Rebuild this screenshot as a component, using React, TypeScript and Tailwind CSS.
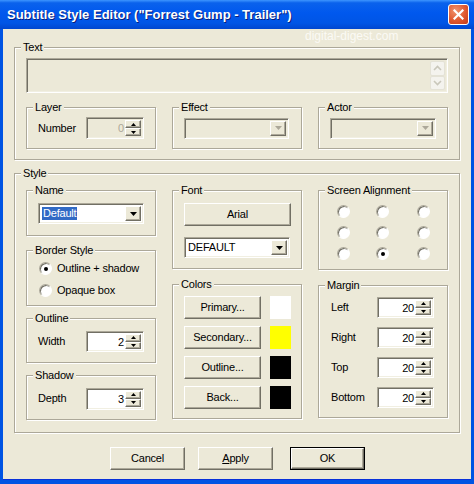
import React from "react";

const raised =
  "border border-t-white border-l-white border-r-[#716F64] border-b-[#716F64] shadow-[inset_-1px_-1px_0_#ACA899]";
const sunken =
  "border border-t-[#ACA899] border-l-[#ACA899] border-r-white border-b-white shadow-[inset_1px_1px_0_#716F64,inset_-1px_-1px_0_#F1EFE2]";

type GroupProps = { label: string; className?: string; children?: React.ReactNode };

const Group: React.FC<GroupProps> = ({ label, className = "", children }) => (
  <div className={`relative border border-[#ACA899] shadow-[inset_1px_1px_0_#fff,1px_1px_0_#fff] ${className}`}>
    <span className="absolute left-[6px] -top-[8px] bg-[#ECE9D8] px-[2px] leading-[14px]">{label}</span>
    {children}
  </div>
);

const Arrow: React.FC<{ disabled?: boolean }> = ({ disabled }) => (
  <svg width="7" height="4" viewBox="0 0 7 4">
    <path d="M0 0h7L3.5 4z" fill={disabled ? "#ACA899" : "#000"} />
  </svg>
);

const Combo: React.FC<{ value?: string; disabled?: boolean; selected?: boolean; className?: string }> = ({
  value,
  disabled,
  selected,
  className = "",
}) => (
  <div className={`flex h-[21px] p-[2px] ${sunken} ${disabled ? "bg-[#ECE9D8]" : "bg-white"} ${className}`}>
    <div className="flex flex-1 items-center pl-[1px]">
      {value && (
        <span className={selected ? "bg-[#316AC5] px-[1px] leading-[13px] text-white" : "leading-[13px]"}>
          {value}
        </span>
      )}
    </div>
    <div className={`flex w-[16px] items-center justify-center bg-[#ECE9D8] ${raised}`}>
      <Arrow disabled={disabled} />
    </div>
  </div>
);

const SpinBtn: React.FC<{ up?: boolean }> = ({ up }) => (
  <div className={`flex flex-1 items-center justify-center bg-[#ECE9D8] ${raised}`}>
    <svg width="5" height="3" viewBox="0 0 5 3">
      <path d={up ? "M0 3h5L2.5 0z" : "M0 0h5L2.5 3z"} fill="#000" />
    </svg>
  </div>
);

const Spin: React.FC<{ value: string; disabled?: boolean; className?: string }> = ({
  value,
  disabled,
  className = "",
}) => (
  <div className={`flex h-[21px] p-[2px] ${sunken} ${disabled ? "bg-[#ECE9D8]" : "bg-white"} ${className}`}>
    <div className={`flex-1 pr-[1px] text-right leading-[17px] ${disabled ? "text-[#ACA899]" : ""}`}>{value}</div>
    <div className="flex w-[16px] flex-col">
      <SpinBtn up />
      <SpinBtn />
    </div>
  </div>
);

const Radio: React.FC<{ checked?: boolean }> = ({ checked }) => (
  <span className="flex h-[13px] w-[13px] items-center justify-center rounded-full border border-t-[#ACA899] border-l-[#ACA899] border-r-white border-b-white bg-white shadow-[inset_1px_1px_0_#716F64]">
    {checked && <span className="h-[4px] w-[4px] rounded-full bg-black" />}
  </span>
);

const Button: React.FC<{ className?: string; children: React.ReactNode }> = ({ className = "", children }) => (
  <div className={`flex items-center justify-center bg-[#ECE9D8] ${raised} ${className}`}>{children}</div>
);

const colors = [
  { label: "Primary...", color: "bg-white" },
  { label: "Secondary...", color: "bg-[#FFFF00]" },
  { label: "Outline...", color: "bg-black" },
  { label: "Back...", color: "bg-black" },
];

const margins = ["Left", "Right", "Top", "Bottom"];

export default function App() {
  return (
    <div
      className="flex h-[484px] w-[474px] flex-col bg-[#0054E3] text-[11px] tracking-[-0.2px] text-black"
      style={{ fontFamily: '"Liberation Sans", Arial, sans-serif' }}
    >
      {/* Title bar */}
      <div className="flex h-[29px] items-center justify-between bg-[linear-gradient(to_bottom,#3D95FF_0%,#0A62EC_10%,#0058EE_45%,#0055E5_80%,#0046CF_100%)] pl-[7px] pr-[5px]">
        <span className="text-[13px] font-bold tracking-normal text-white [text-shadow:1px_1px_0_#0A1E7A]">
          Subtitle Style Editor ("Forrest Gump - Trailer")
        </span>
        <div className="flex h-[21px] w-[21px] items-center justify-center rounded-[3px] border border-white bg-[radial-gradient(circle_at_35%_30%,#F0946F_0%,#E0582F_55%,#C2391A_100%)]">
          <svg width="11" height="11" viewBox="0 0 11 11">
            <path d="M1.5 1.5l8 8M9.5 1.5l-8 8" stroke="#fff" strokeWidth="2.2" strokeLinecap="square" />
          </svg>
        </div>
      </div>

      {/* Body */}
      <div className="relative mx-[3px] mb-[4px] flex flex-1 flex-col bg-[#ECE9D8] pl-[11px] pr-[11px] pt-[18px] shadow-[inset_0_-1px_0_#0831D9]">
        <span className="absolute -top-[2px] left-[302px] text-[12px] tracking-normal text-[#FBFAF5]">
          digital-digest.com
        </span>

        {/* Text */}
        <Group label="Text" className="h-[113px] px-[11px] pt-[10px]">
          <div className={`flex h-[35px] justify-end bg-[#ECE9D8] p-[2px] ${sunken}`}>
            <div className="flex w-[15px] flex-col gap-0">
              <div className="flex h-[16px] items-center justify-center rounded-[2px] border border-[#E4E2D6] bg-[#F4F3EE]">
                <svg width="9" height="6" viewBox="0 0 9 6">
                  <path d="M1 5l3.5-3.5L8 5" stroke="#C9C7BA" strokeWidth="1.6" fill="none" />
                </svg>
              </div>
              <div className="flex h-[16px] items-center justify-center rounded-[2px] border border-[#E4E2D6] bg-[#F4F3EE]">
                <svg width="9" height="6" viewBox="0 0 9 6">
                  <path d="M1 1l3.5 3.5L8 1" stroke="#C9C7BA" strokeWidth="1.6" fill="none" />
                </svg>
              </div>
            </div>
          </div>
          <div className="mt-[14px] flex justify-between">
            <Group label="Layer" className="flex h-[42px] w-[130px] items-center pl-[11px]">
              <span className="w-[48px]">Number</span>
              <Spin value="0" disabled className="h-[22px] w-[58px]" />
            </Group>
            <Group label="Effect" className="flex h-[42px] w-[130px] items-center pl-[11px]">
              <Combo disabled className="w-[105px]" />
            </Group>
            <Group label="Actor" className="flex h-[42px] w-[130px] items-center pl-[11px]">
              <Combo disabled className="w-[106px]" />
            </Group>
          </div>
        </Group>

        {/* Style */}
        <Group label="Style" className="mt-[13px] flex h-[260px] justify-between px-[11px] pt-[16px]">
          <div className="flex w-[130px] flex-col">
            <Group label="Name" className="h-[46px] pl-[11px] pt-[12px]">
              <Combo value="Default" selected className="w-[106px]" />
            </Group>
            <Group label="Border Style" className="mt-[14px] flex h-[56px] flex-col gap-[9px] pl-[12px] pt-[11px]">
              <label className="flex h-[13px] items-center gap-[5px]">
                <Radio checked />
                <span>Outline + shadow</span>
              </label>
              <label className="flex h-[13px] items-center gap-[5px]">
                <Radio />
                <span>Opaque box</span>
              </label>
            </Group>
            <Group label="Outline" className="mt-[12px] flex h-[45px] items-center pl-[11px] pt-[2px]">
              <span className="w-[48px]">Width</span>
              <Spin value="2" className="w-[58px]" />
            </Group>
            <Group label="Shadow" className="mt-[12px] flex h-[45px] items-center pl-[11px] pt-[2px]">
              <span className="w-[48px]">Depth</span>
              <Spin value="3" className="h-[22px] w-[58px]" />
            </Group>
          </div>

          <div className="flex w-[130px] flex-col">
            <Group label="Font" className="h-[79px] pl-[11px] pt-[12px]">
              <Button className="h-[23px] w-[107px]">Arial</Button>
              <Combo value="DEFAULT" className="mt-[11px] w-[106px]" />
            </Group>
            <Group label="Colors" className="mt-[15px] flex h-[135px] flex-col gap-[7px] pl-[11px] pt-[11px]">
              {colors.map((c) => (
                <div key={c.label} className="flex gap-[9px]">
                  <Button className="h-[23px] w-[77px]">{c.label}</Button>
                  <div className={`h-[23px] w-[21px] ${c.color}`} />
                </div>
              ))}
            </Group>
          </div>

          <div className="flex w-[130px] flex-col">
            <Group label="Screen Alignment" className="h-[80px] pl-[18px] pt-[14px]">
              <div className="grid w-[94px] grid-cols-3 gap-y-[8px]">
                {[0, 1, 2, 3, 4, 5, 6, 7, 8].map((i) => (
                  <div key={i} className={i % 3 === 0 ? "" : i % 3 === 1 ? "pl-[8px]" : "pl-[17px]"}>
                    <Radio checked={i === 7} />
                  </div>
                ))}
              </div>
            </Group>
            <Group label="Margin" className="mt-[15px] flex h-[133px] flex-col gap-[9px] pl-[12px] pt-[11px]">
              {margins.map((m) => (
                <div key={m} className="flex items-center">
                  <span className="w-[46px]">{m}</span>
                  <Spin value="20" className="w-[57px]" />
                </div>
              ))}
            </Group>
          </div>
        </Group>

        {/* Buttons */}
        <div className="mt-[14px] flex pl-[96px]">
          <Button className="h-[23px] w-[75px]">Cancel</Button>
          <Button className="ml-[13px] h-[23px] w-[75px]">
            <span>
              <span className="underline">A</span>pply
            </span>
          </Button>
          <div className="ml-[17px] border border-black">
            <Button className="h-[21px] w-[73px]">OK</Button>
          </div>
        </div>
      </div>
    </div>
  );
}
